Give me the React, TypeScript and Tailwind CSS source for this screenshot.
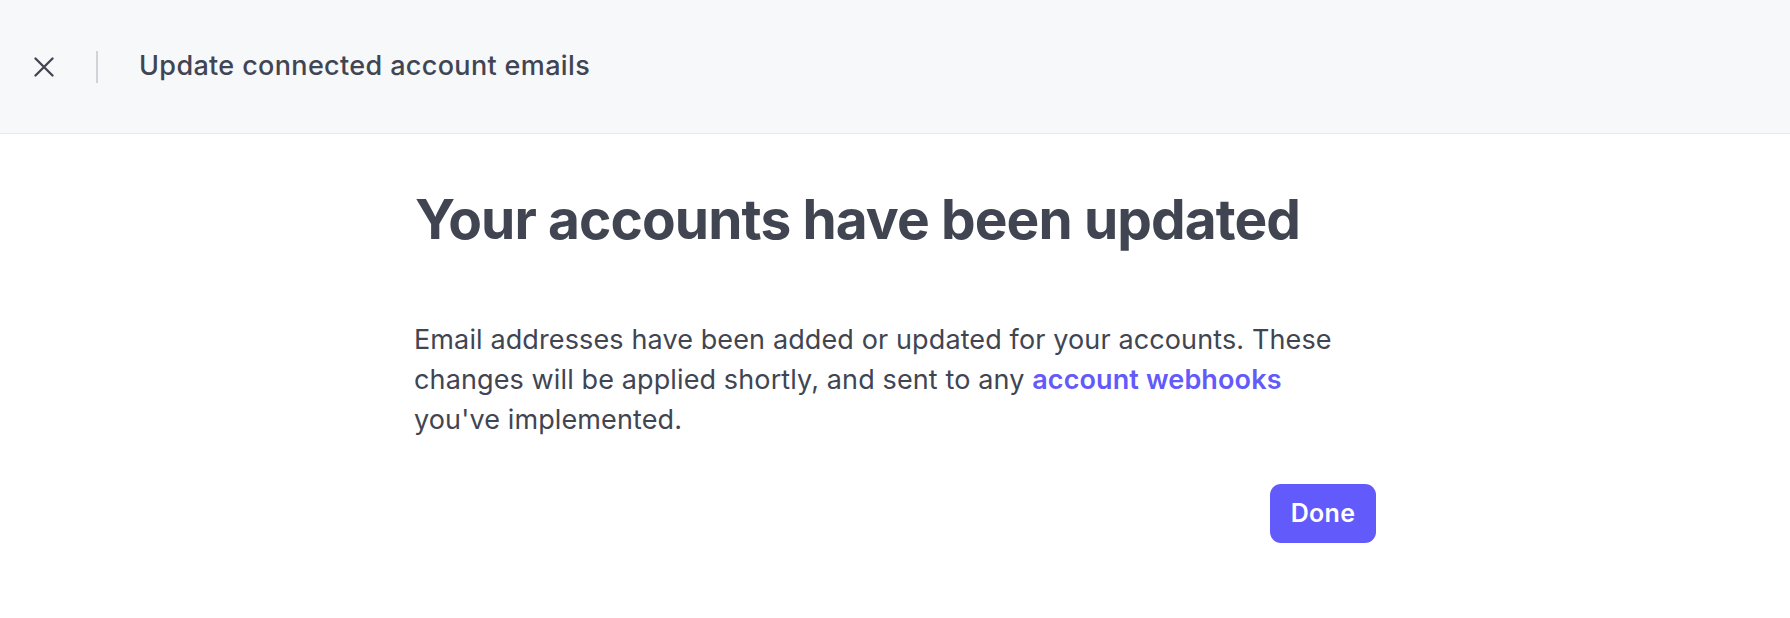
export default function App() {
  return (
    <div className="min-h-screen bg-white text-[#414552] font-['Inter',sans-serif]">
      <header className="h-[134px] bg-[#f6f8fa] border-b border-[#e6e8eb] flex items-center pl-[34px]">
        <button className="w-[20px] h-[20px] flex items-center justify-center text-[#414552]">
          <svg width="20" height="20" viewBox="0 0 20 20" fill="none" stroke="currentColor" strokeWidth="2.3" strokeLinecap="round">
            <path d="M1.5 1.5 L18.5 18.5 M18.5 1.5 L1.5 18.5" />
          </svg>
        </button>
        <div className="w-[2px] h-[32px] bg-[#d0d3d8] ml-[42px] mr-[41px]" />
        <h1 className="text-[27px] font-medium tracking-[0.35px]">Update connected account emails</h1>
      </header>

      <main className="w-[962px] mx-auto pt-[52px]">
        <h2 className="text-[55px] leading-[66px] font-bold tracking-[-0.9px] ml-[1px]">Your accounts have been updated</h2>
        <p className="mt-[68px] text-[27px] leading-[40px] tracking-[0.12px] w-[940px]">
          Email addresses have been added or updated for your accounts. These changes will be applied shortly, and sent to any{' '}
          <a className="text-[#625afa] font-semibold" href="#">account webhooks</a>{' '}
          you've implemented.
        </p>
        <div className="flex justify-end mt-[44px]">
          <button className="h-[59px] w-[106px] rounded-[11px] bg-[#625afa] text-white text-[25px] font-semibold tracking-[0.3px]">Done</button>
        </div>
      </main>
    </div>
  );
}
